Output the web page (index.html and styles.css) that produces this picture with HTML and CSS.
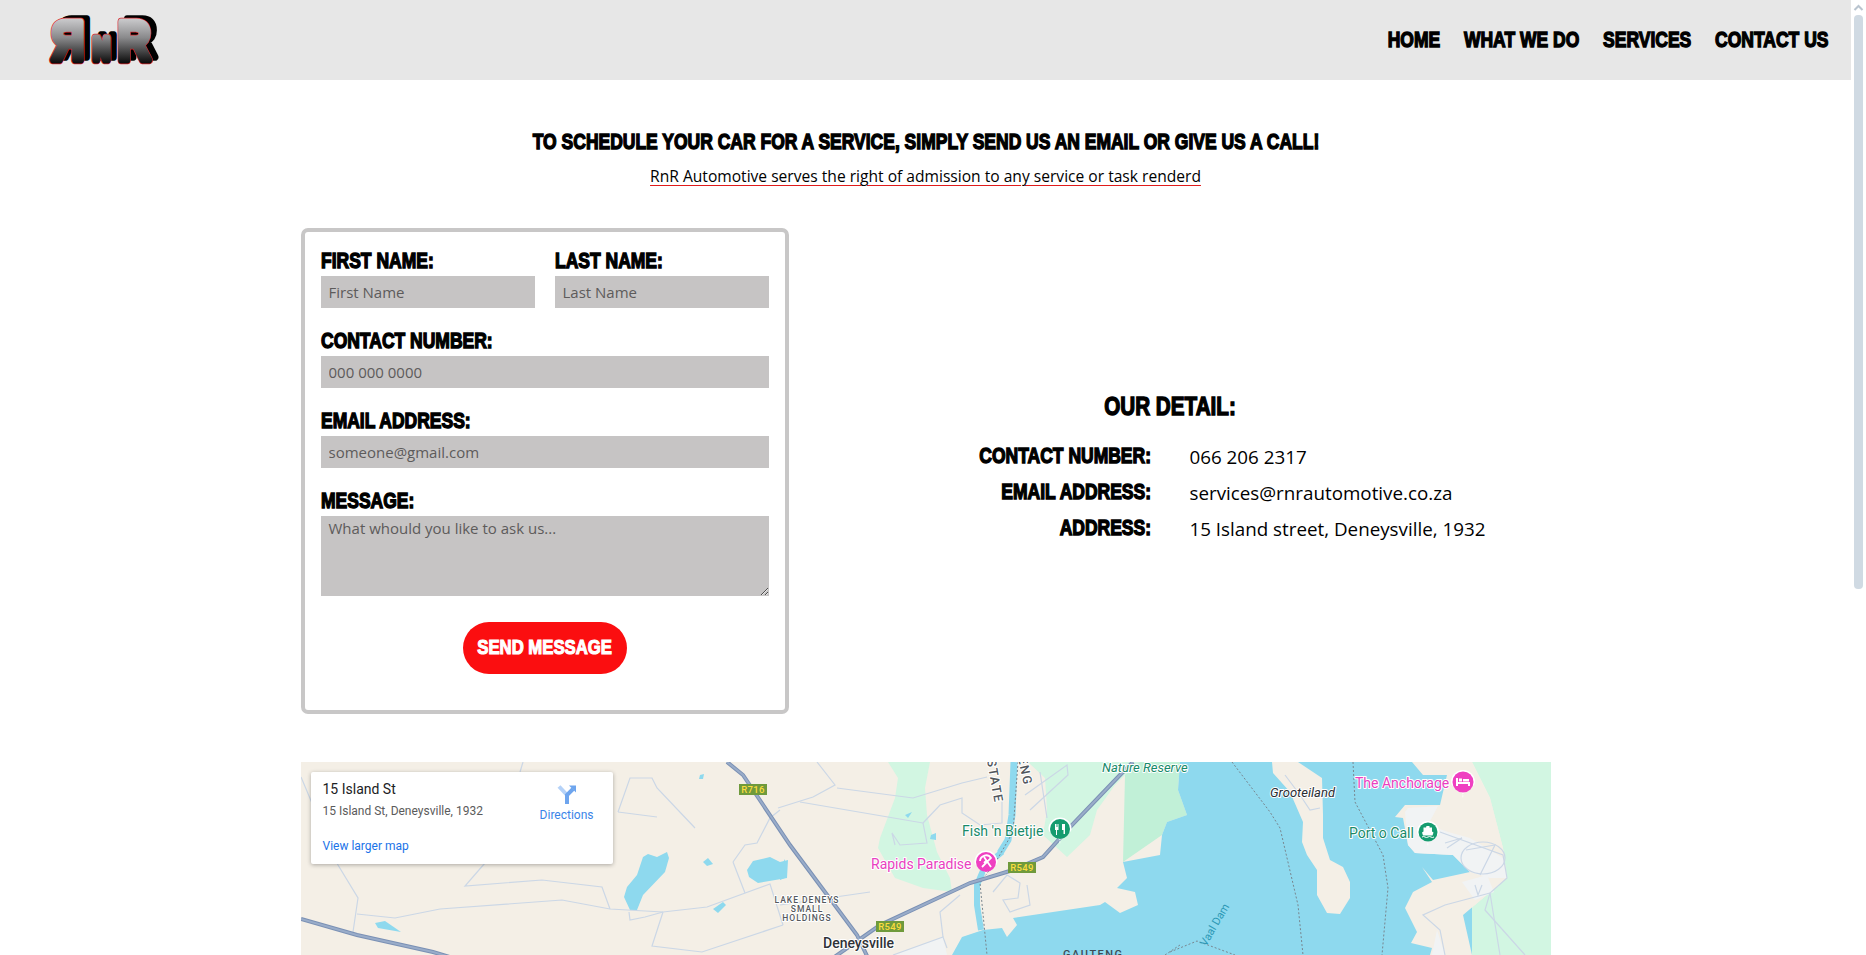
FILE: index.html
```html
<!DOCTYPE html>
<html lang="en">
<head>
<meta charset="utf-8">
<title>RnR Automotive - Contact</title>
<link rel="stylesheet" href="styles.css">
</head>
<body>
<div class="shell">
<div class="page">
  <header class="topbar">
    <a class="logo" href="#" aria-label="RnR Automotive">
      <svg width="122" height="60" viewBox="0 0 122 60">
        <defs>
          <linearGradient id="chrome" gradientUnits="userSpaceOnUse" x1="0" y1="-44" x2="0" y2="4">
            <stop offset="0" stop-color="#d4d4d6"/>
            <stop offset=".45" stop-color="#8a8a8c"/>
            <stop offset="1" stop-color="#060606"/>
          </linearGradient>
          <g id="rnr">
            <text class="logo-big" transform="translate(44,50) scale(-.8,1)">R</text>
            <text class="logo-small" transform="translate(53,50) scale(.72,1)">N</text>
            <text class="logo-big" transform="translate(78,50) scale(.8,1)">R</text>
          </g>
        </defs>
        <use href="#rnr" class="logo-shadow" transform="translate(6,-3)"/>
        <use href="#rnr" class="logo-edge"/>
        <use href="#rnr" class="logo-fill"/>
      </svg>
    </a>
    <nav class="menu">
      <a href="#">Home</a>
      <a href="#">What we do</a>
      <a href="#">Services</a>
      <a href="#">Contact us</a>
    </nav>
  </header>

  <main class="content">
    <section class="intro">
      <h1>To schedule your car for a service, simply send us an email or give us a call!</h1>
      <p><span>RnR Automotive serves the right of admission to any service or task renderd</span></p>
    </section>

    <section class="contact">
      <form class="card">
        <div class="pair">
          <div class="field"><label for="fn">First Name:</label><input id="fn" placeholder="First Name"></div>
          <div class="field"><label for="ln">Last Name:</label><input id="ln" placeholder="Last Name"></div>
        </div>
        <div class="field"><label for="cn">Contact Number:</label><input id="cn" placeholder="000 000 0000"></div>
        <div class="field"><label for="em">Email Address:</label><input id="em" placeholder="someone@gmail.com"></div>
        <div class="field"><label for="ms">Message:</label><textarea id="ms" placeholder="What whould you like to ask us..."></textarea></div>
        <button type="button" class="send"><span>Send Message</span></button>
      </form>

      <div class="details">
        <h2>Our Detail:</h2>
        <dl class="rows">
          <dt>Contact Number:</dt><dd>066 206 2317</dd>
          <dt>Email Address:</dt><dd>services@rnrautomotive.co.za</dd>
          <dt>Address:</dt><dd>15 Island street, Deneysville, 1932</dd>
        </dl>
      </div>
    </section>

    <section class="map">
      <svg class="map-art" width="1250" height="193" viewBox="301 762 1250 193">
        <rect class="land" x="301" y="762" width="1250" height="193"/>
        <polygon class="park" points="888,762 898,778 895,798 880,838 878,848 895,878 923,888 952,892 950,878 937,852 927,815 925,788 930,762"/>
        <polygon class="park" points="1028,762 1045,778 1047,810 1043,835 1067,857 1090,835 1097,810 1115,785 1125,775 1145,762"/>
        <polygon class="park-deep" points="1125,775 1123,862 1162,835 1167,822 1187,815 1178,790 1180,762 1140,762"/>
        <polygon class="park" points="1472,762 1551,762 1551,955 1472,955 1463,915 1507,878 1503,848 1490,798"/>
        <polygon class="water" points="1180,762 1178,790 1187,815 1167,822 1162,835 1160,855 1123,862 1127,878 1117,888 1135,892 1138,905 1120,913 1105,902 1100,905 1013,918 1017,925 1007,937 1002,928 983,930 962,937 952,955 1472,955 1472,762"/>
        <polygon class="land" points="1272,762 1273,773 1290,792 1303,822 1302,842 1307,855 1317,870 1317,895 1327,913 1340,914 1350,898 1350,882 1343,867 1330,860 1323,838 1323,815 1322,778 1298,762"/>
        <polygon class="land" points="1412,762 1423,775 1447,775 1440,805 1405,805 1395,817 1403,818 1408,845 1415,853 1453,855 1470,872 1433,880 1422,867 1432,882 1413,892 1405,908 1417,932 1411,943 1432,948 1430,955 1472,955 1463,915 1507,878 1503,848 1490,798 1472,762"/>
        <polygon class="town" points="1405,812 1408,808 1438,806 1428,825 1448,832 1470,838 1503,858 1507,878 1490,878 1470,872 1453,855 1415,853 1408,845"/>
        <polygon class="town" points="1462,882 1487,875 1494,892 1475,900"/>
        <polygon class="town" points="1432,955 1437,930 1445,955"/>
        <polygon class="town" points="893,955 943,937 947,955"/>
        <polyline class="river" points="1014,762 1012,815 1008,840 1000,853"/>
        <polyline class="river river-low" points="1002,852 985,866 977,885 977,905 981,930"/>
        <polygon class="water" points="700,775 704,774 703,779 699,779"/>
        <polygon class="water" points="643,857 648,854 657,857 667,852 669,858 665,872 643,895 637,910 630,910 624,897 627,887 637,875"/>
        <polygon class="water" points="747,870 753,861 770,857 780,862 788,860 787,878 758,883 749,877"/>
        <polygon class="water" points="703,862 708,858 713,864 707,866"/>
        <polygon class="water" points="713,909 723,902 726,905 718,913"/>
        <polygon class="water" points="375,923 385,921 401,932 378,928"/>
        <polygon class="water" points="780,868 785,859 785,878 780,880"/>
        <polygon class="water" points="905,815 912,812 908,818"/>
        <polygon class="water" points="931,835 936,833 936,840 930,839"/>

        <g class="road">
          <polyline points="301,777 338,865 358,898 353,932"/>
          <polyline points="357,914 395,918 440,909 562,900 610,909 663,912 707,907 770,884 783,925"/>
          <polyline points="485,863 465,886 542,880 602,887 610,909"/>
          <polyline points="618,812 630,778 652,778 657,788 695,828"/>
          <polyline points="618,812 657,817"/>
          <polyline points="523,762 520,772"/>
          <polyline points="663,912 652,946 702,952 783,925"/>
          <polyline points="629,912 630,920 645,917 663,912"/>
          <polyline points="733,862 745,845 757,843 770,818 780,810"/>
          <polyline points="733,862 745,893"/>
          <polyline points="778,808 813,797 835,785 817,762"/>
          <polyline points="800,802 923,823"/>
          <polyline points="837,788 913,798 962,783 987,777"/>
          <polyline points="923,823 940,805 962,798 962,813 980,825 1002,823 1002,798"/>
          <polyline points="923,823 927,843 900,845 892,833 895,845"/>
          <polyline points="1025,795 1067,765 1068,775 1030,810"/>
          <polyline points="1040,772 1047,818"/>
          <polyline points="780,905 870,892"/>
          <polyline points="993,892 1007,875 1020,883 1018,898 1003,900 1010,912 1030,905 1027,885"/>
          <polyline points="943,937 940,912 960,895"/>
          <polyline points="893,955 943,937 947,948"/>
          <polyline points="1285,775 1300,795 1310,810 1320,808"/>
          <polyline points="1440,832 1503,855 1507,878 1490,893 1485,910 1525,955"/>
          <polyline points="1490,893 1500,955"/>
          <polyline points="1490,893 1445,905 1423,915 1440,930 1445,955"/>
          <ellipse cx="1483" cy="858" rx="22" ry="16"/>
          <polyline points="1466,850 1495,845 1480,875"/>
          <polyline points="1445,843 1462,838 1447,848"/>
          <polyline points="1475,885 1478,895 1482,885"/>
        </g>
        <g class="border">
          <polyline points="1018,762 1013,832 998,858 980,883 987,955"/>
          <polyline points="1232,762 1270,812 1280,828 1298,905 1303,955"/>
          <polyline points="1353,762 1355,802 1383,855 1388,888 1382,955"/>
          <polyline points="1170,952 1197,941 1235,955"/>
          <polyline points="1165,955 1180,945"/>
        </g>
        <g class="highway">
          <polyline points="301,919 357,935 433,952 453,958"/>
          <polyline points="727,762 743,775 790,845 857,935 868,958"/>
          <polyline points="833,958 880,925 970,883 1013,870 1043,857 1070,827 1120,775 1133,762"/>
        </g>
        <g class="highway-core">
          <polyline points="301,919 357,935 433,952 453,958"/>
          <polyline points="727,762 743,775 790,845 857,935 868,958"/>
          <polyline points="833,958 880,925 970,883 1013,870 1043,857 1070,827 1120,775 1133,762"/>
        </g>

        <g class="shield">
          <rect x="739" y="784" width="28" height="11"/><text x="753" y="793">R716</text>
          <rect x="1008" y="862" width="28" height="11"/><text x="1022" y="871">R549</text>
          <rect x="876" y="921" width="28" height="11"/><text x="890" y="930">R549</text>
        </g>

        <g class="label">
          <text class="small-caps" x="807" y="903">LAKE DENEYS</text>
          <text class="small-caps" x="807" y="912">SMALL</text>
          <text class="small-caps" x="807" y="921">HOLDINGS</text>
          <text class="rotated" transform="translate(987,760) rotate(80)">STATE</text>
          <text class="rotated" transform="translate(1018,758) rotate(78)">ENG</text>
          <text class="place" x="823" y="948">Deneysville</text>
          <text class="gauteng" x="1063" y="958">GAUTENG</text>
          <text class="isle" x="1270" y="797">Grooteiland</text>
          <text class="vaal" transform="translate(1206,947) rotate(-60)">Vaal Dam</text>
          <text class="green" x="962" y="836">Fish 'n Bietjie</text>
          <text class="green green-it" x="1102" y="772">Nature Reserve</text>
          <text class="green" x="1349" y="838">Port o Call</text>
          <text class="pink" x="871" y="869">Rapids Paradise</text>
          <text class="pink" x="1355" y="788">The Anchorage</text>
        </g>

        <g class="pin pin-green" transform="translate(1060,829)">
          <path class="pin-halo" d="M-11.500 0A11.500 11.500 0 0 1 11.500 0C11.500 6-3 8 0 15C3 8-11.500 6-11.500 0Z"/>
          <circle r="10"/>
          <path class="pin-icon" d="M-5-5h1.500v3h1v-3h1v6h-1.500v5h-1v-5h-1zM2-5h3v10h-1.500v-4h-1.500z"/>
        </g>
        <g class="pin pin-pink" transform="translate(986,862)">
          <path class="pin-halo" d="M-11.500 0A11.500 11.500 0 0 1 11.500 0C11.500 6-3 8 0 15C3 8-11.500 6-11.500 0Z"/>
          <circle r="10"/>
          <path class="pin-line" d="M-6-1A6 6 0 0 1 5-4L-4 5M-2-5L5 5M1-2L-2 1"/>
        </g>
        <g class="pin pin-pink" transform="translate(1463,782)">
          <path class="pin-halo" d="M-12 0A12 12 0 0 1 12 0C12 7-3 9 0 16C3 9-12 7-12 0Z"/>
          <circle r="10.500"/>
          <path class="pin-icon" d="M-7-4h2v4h12v4h-2v-2h-10v2h-2zM-4-3.500h3v3h-3zM0-3h6v2.500h-6z"/>
        </g>
        <g class="pin pin-green" transform="translate(1428,832)">
          <path class="pin-halo" d="M-11 0A11 11 0 0 1 11 0C11 6-3 7 0 14C3 7-11 6-11 0Z"/>
          <circle r="9.500"/>
          <path class="pin-icon" d="M-1.500-6h3v1.500h2.500v4l1.500 1-1 3h-9.500l-1-3 1.500-1v-4h2.500z"/>
          <path class="pin-wave" d="M-6 5q1.500-1 3 0t3 0 3 0 3 0"/>
        </g>
      </svg>

      <aside class="place-card">
        <div class="place-text">
          <div class="place-name">15 Island St</div>
          <div class="place-addr">15 Island St, Deneysville, 1932</div>
          <a class="place-link" href="#">View larger map</a>
        </div>
        <a class="directions" href="#">
          <svg width="22" height="20" viewBox="0 0 22 20">
            <path class="dir-light" d="M3 2.500L11 11"/>
            <path class="dir-dark" d="M11 20V11L17 5"/>
            <path class="dir-head" d="M13 1.500H20V8.500Z"/>
          </svg>
          <span>Directions</span>
        </a>
      </aside>
    </section>
  </main>
</div>
<div class="scrollbar" aria-hidden="true">
  <svg class="scroll-arrow" width="15" height="12" viewBox="0 0 15 12"><path d="M3.500 9L7.500 5L11.500 9"/></svg>
  <div class="scroll-thumb"></div>
</div>
</div>
</body>
</html>
```

FILE: styles.css
```css
* { box-sizing: border-box; }
html, body { margin: 0; height: 955px; overflow: hidden; background: #fff; }
body { font-family: "Open Sans", "Noto Sans", sans-serif; color: #000; }
a { text-decoration: none; color: inherit; }

.shell { display: grid; grid-template-columns: 1851px 15px; height: 955px; }
.page { height: 955px; overflow: hidden; }

/* display face: a heavy sans squeezed to the narrow width of the original lettering */
.menu, h1, h2, label, dt, .send span {
  font-family: "Liberation Sans", sans-serif;
  font-weight: 700;
  text-transform: uppercase;
  -webkit-text-stroke: 1.400px #000;
  white-space: nowrap;
}
h1, h2 { transform: scaleX(.795); }
.menu { transform: scaleX(.795); transform-origin: right center; }
label { transform: scaleX(.795); transform-origin: left center; align-self: flex-start; }
dt { transform: scaleX(.795); transform-origin: right center; }

/* header */
.topbar { height: 80px; background: #e7e7e7; display: flex; align-items: center; justify-content: space-between; padding: 0 23px 0 40px; }
.logo { display: block; height: 60px; }
.logo-big { font: 700 56px "Liberation Sans", sans-serif; }
.logo-small { font: 700 32px "Liberation Sans", sans-serif; }
.logo-shadow { fill: #000; stroke: #000; stroke-width: 7.500px; stroke-linejoin: round; }
.logo-edge { fill: #d8262c; stroke: #d8262c; stroke-width: 8.500px; stroke-linejoin: round; }
.logo-fill { fill: url(#chrome); stroke: url(#chrome); stroke-width: 7px; stroke-linejoin: round; }
.menu { display: flex; gap: 30px; font-size: 22px; line-height: 24px; }

/* intro */
.content { width: 1250px; margin: 0 auto; }
.intro { padding-top: 50px; text-align: center; }
h1 { margin: 0; font-size: 22px; line-height: 24px; }
.intro p { margin: 11px 0 0; font-size: 15.600px; line-height: 22px; }
.intro p span { text-decoration: underline #e01b1b 1px; text-underline-offset: 3px; text-decoration-skip-ink: auto; }

/* form */
.contact { display: flex; align-items: center; margin-top: 41px; }
.card { width: 488px; height: 486px; flex: none; border: 4px solid #c8c7c7; border-radius: 7px; padding: 12px 16px 0; display: flex; flex-direction: column; }
.pair { display: grid; grid-template-columns: 214px 214px; gap: 20px; margin-bottom: 16px; }
.field { display: flex; flex-direction: column; margin-bottom: 16px; }
.pair .field { margin-bottom: 0; }
label { font-size: 22px; line-height: 33px; height: 32px; }
input, textarea { display: block; width: 100%; background: #c6c4c4; border: 0; outline: 0; border-radius: 0; padding: 0 8px; height: 32px; font: 15px "Open Sans", sans-serif; color: #000; }
textarea { height: 80px; padding-top: 2px; resize: vertical; }
input::placeholder, textarea::placeholder { color: #5d5b5b; opacity: 1; }
.send { align-self: center; width: 164px; height: 52px; margin-top: 10px; background: #fb0e10; border: 0; border-radius: 26px; padding: 0 0 3px; display: flex; align-items: center; justify-content: center; }
.send span { display: block; font-size: 21px; color: #fff; -webkit-text-stroke: 1.200px #fff; transform: scaleX(.795); }

/* details */
.details { flex: 1; padding-bottom: 10px; }
h2 { margin: 0 0 22px; text-align: center; font-size: 26px; line-height: 32px; }
.rows { display: grid; grid-template-columns: 362px 1fr; column-gap: 39px; row-gap: 10px; margin: 0; }
dt { text-align: right; font-size: 22px; line-height: 24px; }
dd { margin: 0; font-size: 18.800px; line-height: 26px; }

/* map */
.map { position: relative; height: 193px; margin-top: 48px; overflow: hidden; }
.map-art { display: block; }
.land { fill: #f4efe6; }
.park { fill: #d2f6e2; }
.park-deep { fill: #c1f0d7; }
.water { fill: #8ed9ee; }
.town { fill: #f1f3f4; }
.river { fill: none; stroke: #8ed9ee; stroke-width: 7px; stroke-linejoin: round; }
.river-low { stroke-width: 6px; }
.road { fill: none; stroke: #cbd7e6; stroke-width: 1.200px; }
.border { fill: none; stroke: #78868f; stroke-width: 1px; stroke-dasharray: 2 2; }
.highway { fill: none; stroke: #7a90b4; stroke-width: 4px; }
.highway-core { fill: none; stroke: #99acc9; stroke-width: 2px; }
.shield rect { fill: #6f9a3c; }
.shield text { font: 500 9.500px "Roboto", sans-serif; fill: #fbdc3c; text-anchor: middle; letter-spacing: .3px; }
.label text { font-family: "Roboto", sans-serif; paint-order: stroke; stroke: #fff; stroke-width: 2px; stroke-linejoin: round; }
.small-caps { font-size: 8.500px; font-weight: 500; letter-spacing: 1px; text-anchor: middle; fill: #55595e; }
.rotated { font-size: 12.500px; letter-spacing: 1.500px; fill: #50565c; font-weight: 500; }
.place { font-size: 14px; font-weight: 500; fill: #2f3237; }
.gauteng { font-size: 11px; letter-spacing: 1.500px; fill: #3c4b55; font-weight: 500; stroke: none !important; }
.isle { font-size: 13px; font-style: italic; fill: #2a2d33; }
.vaal { font-size: 11px; fill: #2b98b5; stroke: none !important; }
.green { font-size: 14px; fill: #188a69; }
.green-it { font-style: italic; font-size: 13px; }
.pink { font-size: 14px; fill: #e93fc0; }
.pin-halo { fill: #fff; }
.pin-green circle { fill: #159c6f; }
.pin-pink circle { fill: #ef3fc1; }
.pin-icon { fill: #fff; }
.pin-line { fill: none; stroke: #fff; stroke-width: 1.800px; }
.pin-wave { fill: none; stroke: #fff; stroke-width: 1px; }

.place-card { position: absolute; left: 10px; top: 10px; width: 302px; height: 92px; background: #fff; border-radius: 2px; box-shadow: 0 1px 4px rgba(0, 0, 0, .3); display: flex; justify-content: space-between; padding: 8px 19px 0 12px; font-family: "Roboto", sans-serif; }
.place-name { font-size: 14px; line-height: 18px; font-weight: 400; color: #202124; }
.place-addr { font-size: 12px; line-height: 18px; margin-top: 4px; color: #5b5b5b; }
.place-link { display: block; font-size: 12px; line-height: 16px; margin-top: 18px; color: #1a73e8; }
.directions { display: flex; flex-direction: column; align-items: center; gap: 3px; padding-top: 4px; font-size: 12px; line-height: 16px; color: #3a84e8; }
.dir-light { fill: none; stroke: #b5d2f8; stroke-width: 4px; }
.dir-dark { fill: none; stroke: #6ea5ee; stroke-width: 4px; }
.dir-head { fill: #6ea5ee; }

/* scrollbar */
.scrollbar { background: #fff; display: flex; flex-direction: column; align-items: center; }
.scroll-arrow { display: block; margin-top: 1px; }
.scroll-arrow path { fill: none; stroke: #b9c4cf; stroke-width: 2px; }
.scroll-thumb { width: 9px; height: 574px; margin-top: 2px; background: #d0dae3; border-radius: 4px; }
```
